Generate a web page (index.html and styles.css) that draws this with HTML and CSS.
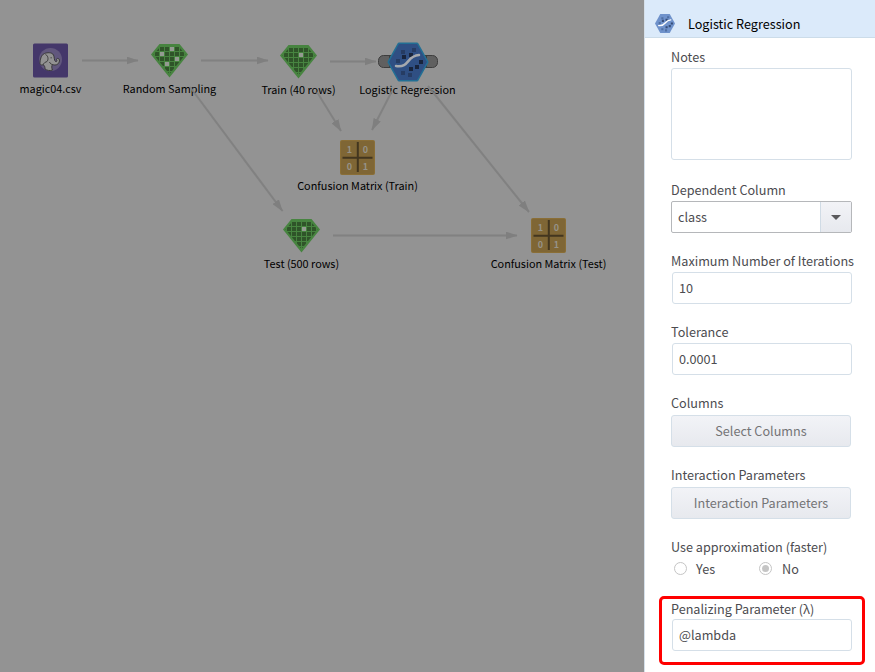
FILE: index.html
```html
<!DOCTYPE html>
<html lang="en">
<head>
<meta charset="utf-8">
<title>Logistic Regression</title>
<link rel="stylesheet" href="styles.css">
</head>
<body>
<svg class="defs" width="0" height="0" aria-hidden="true">
  <defs>
    <pattern id="cells" x="4" y="3" width="5" height="5" patternUnits="userSpaceOnUse"><rect width="4" height="4" fill="#2f5429"/></pattern>
    <symbol id="gem" viewBox="0 0 37 34">
      <path d="M8.500 0H28.500L37 10.500L18.500 33.500L0 10.500Z" fill="#478440"/>
      <path d="M9 3H28L34.500 10.500L18.500 30L2.500 10.500Z" fill="url(#cells)"/>
    </symbol>
    <symbol id="matrix" viewBox="0 0 35 35">
      <rect width="35" height="35" rx="2" fill="#8a6e36"/>
      <rect x="1" y="1" width="33" height="33" rx="1" fill="#7f6635"/>
      <path d="M17.800 2V32M2.500 17.800H32.500" stroke="#43361f" stroke-width="2"/>
      <g class="digits"><text x="9.500" y="13">1</text><text x="25.500" y="13">0</text><text x="9.500" y="30">0</text><text x="25.500" y="30">1</text></g>
    </symbol>
    <symbol id="logit" viewBox="0 0 38 36">
      <path d="M10 0H28L38 18L28 36H10L0 18Z" class="hex"/>
      <path d="M12 6h4v4h-4zM23 4h4v4h-4zM7 15h4v4h-4zM12 27h4v4h-4zM19 29h4v4h-4z" class="dot-soft"/>
      <path d="M13 11h4v4h-4zM20 9h4v4h-4zM30 16h4v4h-4zM20 23h4v4h-4zM26 21h4v4h-4z" class="dot"/>
      <path d="M7 22C21 24 17 12 30 11" class="curve"/>
    </symbol>
    <marker id="tip" viewBox="0 0 12 8" refX="11.500" refY="4" markerWidth="12" markerHeight="8" markerUnits="userSpaceOnUse" orient="auto"><path d="M0 0L12 4L0 8Z" fill="#7f7f7f"/></marker>
  </defs>
</svg>
<div class="app">
  <main class="canvas">
    <div class="node csv">
      <svg width="35" height="35" viewBox="0 0 35 35">
        <rect width="35" height="34" y=".500" rx="1.500" fill="#44376a"/>
        <circle cx="17.500" cy="16.500" r="11.500" fill="#61577d"/>
        <path d="M7 20.500C7 17 8 12 11.500 10.500C14 9.500 19 9 20.500 12C21.500 14 21 17.500 22.500 18.500C23.500 19.200 24.500 18 23.500 16.500C23.500 15 26 15 26.500 17C26.700 20 24.500 22 22 22C20.500 22 20 21.500 19.500 21.500C18.500 23 18.500 25 19.500 27C17 28 14 27.500 12 26C12 23.500 11.500 22.500 10 21.500C9 22.500 7.500 22 7 20.500Z" fill="#929292" stroke="#333" stroke-width=".9"/>
        <path d="M12.500 11.500C16 13 15.500 18.500 13 19C11.500 19 11.500 20.500 10 21.500M17.500 14.800h1.300M16.500 19C17 20.500 18.500 21.500 19.500 21.500" fill="none" stroke="#333" stroke-width=".9"/>
      </svg>
      <span>magic04.csv</span>
    </div>
    <div class="node sampling">
      <svg width="37" height="34"><use href="#gem"/><path d="M9 8h4v4h-4zM19 3h4v4h-4zM24 13h4v4h-4zM14 18h4v4h-4z" fill="#949b92"/></svg>
      <span>Random Sampling</span>
    </div>
    <div class="node train">
      <svg width="37" height="34"><use href="#gem"/><path d="M19 8h4v4h-4z" fill="#949b92"/></svg>
      <span>Train (40 rows)</span>
    </div>
    <div class="node logistic">
      <svg width="62" height="42" viewBox="0 0 62 42">
        <rect x="1.500" y="14.500" width="59" height="12" rx="5" fill="#606060" stroke="#3d3d3d"/>
        <path d="M12.500 15V26M49.500 15V26" stroke="#3d3d3d"/>
        <path d="M22 3H40L50 21L40 39H22L12 21Z" class="glow"/>
        <use href="#logit" x="12" y="3" width="38" height="36"/>
      </svg>
      <span>Logistic Regression</span>
    </div>
    <div class="node cm-train"><svg width="35" height="35"><use href="#matrix"/></svg><span>Confusion Matrix (Train)</span></div>
    <div class="node test">
      <svg width="37" height="34"><use href="#gem"/><path d="M19 8h4v4h-4z" fill="#949b92"/></svg>
      <span>Test (500 rows)</span>
    </div>
    <div class="node cm-test"><svg width="35" height="35"><use href="#matrix"/></svg><span>Confusion Matrix (Test)</span></div>
    <svg class="edges" width="644" height="672">
      <path d="M82 60.500H138"/><path d="M201 60.500H268"/><path d="M330 61.500H376"/>
      <path d="M190 87L282.500 211"/><path d="M317 92L341 131"/><path d="M392 91L372 130"/>
      <path d="M428 86L529 212"/><path d="M333 235.500H517"/>
    </svg>
  </main>
  <aside class="panel">
    <header class="panel-head">
      <svg width="20" height="19" viewBox="0 0 38 36" class="light"><use href="#logit"/></svg>
      <h1>Logistic Regression</h1>
    </header>
    <form class="form">
      <div class="field notes"><label>Notes</label><div class="box area"></div></div>
      <div class="field dependent"><label>Dependent Column</label>
        <div class="box select"><span>class</span><i><svg width="10" height="5"><path d="M0 0H10L5 5Z" fill="#5a5a5c"/></svg></i></div></div>
      <div class="field"><label>Maximum Number of Iterations</label><div class="box input">10</div></div>
      <div class="field"><label>Tolerance</label><div class="box input">0.0001</div></div>
      <div class="field action"><label>Columns</label><div class="box button">Select Columns</div></div>
      <div class="field action"><label>Interaction Parameters</label><div class="box button">Interaction Parameters</div></div>
      <div class="field approx"><label>Use approximation (faster)</label>
        <div class="radios"><span class="radio"><b></b>Yes</span><span class="radio on"><b></b>No</span></div></div>
      <div class="field penalty"><label>Penalizing Parameter (λ)</label><div class="box input">@lambda</div></div>
    </form>
  </aside>
</div>
</body>
</html>
```
FILE: styles.css
```css
* { box-sizing: border-box; }
body { margin: 0; font-family: "Noto Sans CJK SC", "Noto Sans", sans-serif; font-size: 12.65px; color: #4c4c50; }
.defs { position: absolute; }
.app { display: flex; width: 875px; height: 672px; overflow: hidden; background: #fff; }

.canvas { position: relative; width: 644px; background: #939393; }
.node { position: absolute; display: flex; flex-direction: column; align-items: center; width: 161px; margin-left: -80.5px; color: #000; font-size: 10.85px; line-height: 16px; white-space: nowrap; }
.node span { margin-top: 2px; }
.csv { left: 50.5px; top: 43px; }
.sampling { left: 169.5px; top: 44px; }
.sampling span { margin-top: 2px; }
.train { left: 298.5px; top: 45px; }
.logistic { left: 407.5px; top: 41px; }
.logistic span { margin-top: -2px; }
.cm-train { left: 357.5px; top: 140px; }
.test { left: 301.5px; top: 219px; }
.cm-test { left: 548.5px; top: 218px; }
.edges { position: absolute; left: 0; top: 0; }
.edges > path { fill: none; stroke: #7f7f7f; stroke-opacity: .9; stroke-width: 2; marker-end: url(#tip); }
.digits { font: bold 9px "Noto Sans CJK SC", sans-serif; fill: #969288; text-anchor: middle; }
.hex { fill: var(--hex, #2f4f83); }
.dot-soft { fill: var(--dot-soft, #263c63); }
.dot { fill: var(--dot, #18243c); }
.curve { fill: none; stroke: var(--curve, #a6a9ae); stroke-width: 2.5; stroke-linecap: round; }
.glow { fill: #226f94; stroke: #226f94; stroke-width: 3; stroke-linejoin: round; }
.light { --hex: #6f92cb; --dot-soft: #4f6fa3; --dot: #364d78; --curve: #fff; }

.panel { width: 231px; border-left: 1px solid #d5e0ea; }
.panel-head { display: flex; align-items: center; gap: 13px; height: 38px; padding: 10px 0 0 10px; background: #dbeafa; border-bottom: 1px solid #ccdce9; }
.panel-head h1 { margin: 0; font-size: 12.65px; font-weight: 400; line-height: 20px; color: #000; }
.form { display: flex; flex-direction: column; padding: 8px 0 0 26px; }
.field { display: flex; flex-direction: column; width: 181px; margin-bottom: 17px; }
.field label { height: 22px; line-height: 22px; white-space: nowrap; }
.box { height: 32px; border: 1px solid #d5dfe8; border-radius: 3px; line-height: 30px; }
.area { height: 92px; }
.notes { margin-bottom: 19px; }
.input { margin-left: 1px; padding-left: 6px; }
.select { display: flex; justify-content: space-between; padding-left: 6px; border-color: #b5b7ba; border-radius: 2px; }
.select i { display: flex; align-items: center; justify-content: center; width: 31px; border-left: 1px solid #d0dbe5; background: linear-gradient(#f2f3f7, #e7e9ee); }
.action label { height: 23px; }
.action .box { width: 180px; background: linear-gradient(#f2f3f7, #e7e9ee); color: #747476; text-align: center; }
.approx { margin-bottom: 16px; }
.approx .radios { display: flex; height: 20px; margin-bottom: 2px; }
.radio { display: flex; align-items: center; width: 85px; padding-left: 3px; }
.radio b { display: flex; width: 13px; height: 13px; margin-right: 9px; padding: 2px; border: 1px solid #c5c5c5; border-radius: 50%; }
.radio + .radio b { margin-right: 10px; }
.radio.on b::after { content: ""; flex: 1; border-radius: 50%; background: #c5c5c5; }
.penalty { width: 206px; height: 69px; margin: 0 0 0 -12px; padding: 0 10px 0 9px; border: 3px solid #f00; border-radius: 5px; }
.penalty label { height: 20px; line-height: 19px; }
```
